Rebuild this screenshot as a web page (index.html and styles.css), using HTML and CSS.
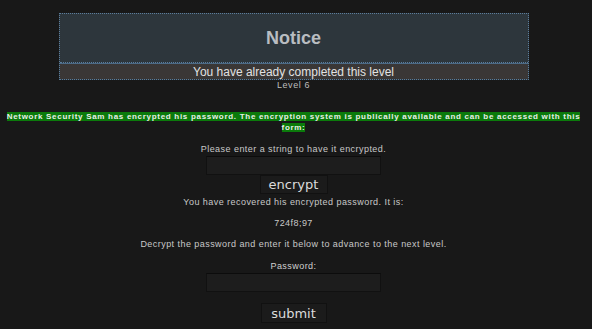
FILE: index.html
```html
<!DOCTYPE html>
<html lang="en">

<head>
    <meta charset="UTF-8">
    <meta name="viewport" content="width=device-width, initial-scale=1.0">
    <title>Level 6</title>
    <link rel="stylesheet" href="styles.css">
</head>

<body>
    <div class="notice">
        <h2 class="notice-title">Notice</h2>
        <div class="notice-body">You have already completed this level</div>
    </div>
    <p class="level">Level 6</p>

    <p class="intro"><span class="highlight">Network Security Sam has encrypted his password. The encryption system is publically available and can be accessed with this form:</span></p>

    <form class="box" onsubmit="return false;">
        <label for="str">Please enter a string to have it encrypted.</label>
        <input type="text" id="str">
        <button type="submit">encrypt</button>
    </form>

    <p class="msg">You have recovered his encrypted password. It is:</p>
    <p class="msg code">724f8;97</p>
    <p class="msg">Decrypt the password and enter it below to advance to the next level.</p>

    <form class="box" onsubmit="return false;">
        <label for="pass" class="pass-label">Password:</label>
        <input type="text" id="pass">
        <button type="submit" class="submit">submit</button>
    </form>
</body>

</html>
```

FILE: styles.css
```css
body {
    margin: 0;
    padding-right: 5px;
    background-color: #181818;
    color: #c8c8c8;
    font-family: "Liberation Sans", Arial, sans-serif;
    text-align: center;
}

.notice {
    width: 468px;
    margin: 13px auto 0;
    background-color: #2d363c;
    border: 1px dotted #5b7d9c;
}

.notice-title {
    margin: 0;
    height: 48px;
    line-height: 49px;
    font-size: 18px;
    color: #b9bdc1;
    border-bottom: 1px dotted #5b7d9c;
}

.notice-body {
    height: 15px;
    line-height: 16px;
    font-size: 12px;
    color: #e2e2e2;
    background-color: #3a3736;
    border-top: 1px solid #4c6a86;
}

.level {
    margin: 0;
    font-size: 9px;
    letter-spacing: 0.6px;
    color: #bdbdbd;
}

.intro {
    margin: 21px 0 0;
    font-size: 8px;
    line-height: 11px;
    font-weight: bold;
    letter-spacing: 0.7px;
}

.highlight {
    background-color: #0b7a0b;
    color: #e8f0e8;
}

.box {
    display: flex;
    flex-direction: column;
    align-items: center;
    margin-top: 11px;
}

.box label,
.msg {
    font-size: 9px;
    letter-spacing: 0.45px;
    color: #c8c8c8;
}

.box input {
    box-sizing: border-box;
    width: 175px;
    height: 19px;
    margin-top: 2px;
    padding: 0;
    background-color: #1d1d1d;
    border: 1px solid #111111;
    border-top-color: #0c0c0c;
}

.box button {
    box-sizing: border-box;
    width: 68px;
    height: 19px;
    padding: 0;
    font-family: "DejaVu Sans", sans-serif;
    font-size: 13px;
    line-height: 17px;
    color: #dcdcdc;
    background-color: #1b1b1b;
    border: 1px solid #111111;
}

.msg {
    margin: 3px 0 0;
}

.code {
    margin-top: 11px;
}

.code + .msg {
    margin-top: 11px;
}

.pass-label {
    margin-top: 1px;
    color: #d0d0d0 !important;
}

.box .submit {
    width: 66px;
    height: 20px;
    margin-top: 11px;
}
```
